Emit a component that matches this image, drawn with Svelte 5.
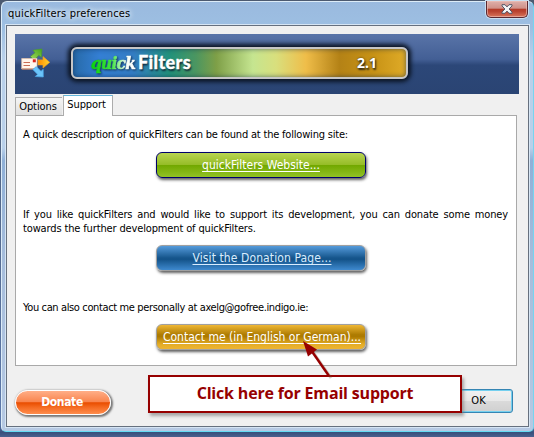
<script>
  const version = '2.1';
</script>

<div class="desktop">
  <div class="window">
    <header class="titlebar">
      <span class="title">quickFilters preferences</span>
      <button class="close" aria-label="Close">
        <svg width="12" height="10" viewBox="0 0 12 10">
          <path d="M1 .7h3l2 2.2L8 .7h3v1.2L8.1 5 11 8.1v1.2H8L6 7.1 4 9.3H1V8.1L3.9 5 1 1.9z" fill="#f4f4f6" stroke="#535666" stroke-width="1" />
        </svg>
      </button>
    </header>

    <main class="client">
      <section class="banner">
        <svg class="mail" width="30" height="30" viewBox="0 0 30 30">
          <defs>
            <linearGradient id="og" x1="0" x2="1"><stop offset="0" stop-color="#ff8a00" /><stop offset="1" stop-color="#ffd52e" /></linearGradient>
            <linearGradient id="gg" x1="0" y1="1" x2="1" y2="0"><stop offset="0" stop-color="#a7dc61" /><stop offset="1" stop-color="#46a51b" /></linearGradient>
          </defs>
          <path d="M9.500 8.500 14 4.700 12 2.200 21 1 20.300 9.200 17.800 7.300 13 12.500z" fill="url(#gg)" stroke="#4a9e2d" stroke-width=".7" />
          <path d="M.7 10.500h15.300v10.500H.7z" fill="#fff6ec" stroke="#e5c3ab" stroke-width=".7" />
          <path d="M1 21h15" stroke="#bd765b" />
          <path d="M2.500 14.500h6.500M2.500 17.500h6.500" stroke="#c76c54" stroke-width="1.100" />
          <path d="M11.800 11.300h3v3h-3z" fill="#d9261c" />
          <path d="M17 11.900h5V8.600l6.700 5.700-6.700 5.700v-3.100h-5z" fill="url(#og)" stroke="#eda020" stroke-width=".7" />
          <path d="M11.800 21.500 15.300 18.600 20 23.300 22.200 21.300 22.300 29 14.300 28.500 16.500 26.300z" fill="#6bc4fa" stroke="#49a8e8" stroke-width=".7" />
        </svg>
        <div class="plaque">
          <span class="quick">quick</span><span class="filters">Filters</span>
          <span class="version">{version}</span>
        </div>
      </section>

      <nav class="tabs">
        <button class="tab">Options</button>
        <button class="tab active">Support</button>
      </nav>

      <section class="panel">
        <p class="site">A quick description of quickFilters can be found at the following site:</p>
        <button class="link green"><span>quickFilters Website...</span></button>
        <p class="like">If you like quickFilters and would like to support its development, you can donate some money towards the further development of quickFilters.</p>
        <button class="link blue"><span>Visit the Donation Page...</span></button>
        <p class="mailto">You can also contact me personally at axelg@gofree.indigo.ie:</p>
        <button class="link gold"><span>Contact me (in English or German)...</span></button>
      </section>

      <footer class="footer">
        <button class="donate">Donate</button>
        <button class="ok">OK</button>
      </footer>
    </main>
  </div>

  <div class="callout">Click here for Email support</div>
  <svg class="arrow" width="36" height="40" viewBox="0 0 36 40">
    <path d="M10 10 28 36" stroke="#6a5230" stroke-opacity=".3" stroke-width="3" transform="translate(2 2)" />
    <path d="M10 10 28 36" stroke="#960000" stroke-width="2.400" />
    <path d="M2 1 16 9.500 7 16.500z" fill="#960000" />
  </svg>
</div>

<style>
  :global(body) { margin: 0; overflow: hidden; }
  .desktop, .desktop * { box-sizing: border-box; }
  button { margin: 0; padding: 0; font: inherit; color: inherit; }
  .desktop {
    position: relative;
    width: 534px;
    height: 437px;
    padding: 1px 0 4px 1px;
    background: linear-gradient(#4c5a70 0, #5d79ab 97%, #38507c 99%, #4a608f 100%);
    font: 11px/14px "DejaVu Sans Condensed", "DejaVu Sans", sans-serif;
    font-stretch: condensed;
    color: #000;
  }
  .window {
    width: 533px;
    height: 431px;
    display: flex;
    flex-direction: column;
    border: 1px solid #dcecf8;
    border-bottom-color: #63dcf3;
    border-right-color: #76d5f0;
    border-radius: 6px 6px 5px 5px;
    background: linear-gradient(#9abadf 0, #9dbfe2 6%, #b9d0ea 13%, #b9d0ea 34%, #8fb0d8 37%, #a6bddc 60%, #b6c9e3 100%);
    padding: 0 4px 4px 4px;
  }
  .titlebar { height: 23px; display: flex; justify-content: space-between; }
  .title { padding: 5px 0 0 2px; letter-spacing: .19px; text-shadow: 0 0 5px #fff, 0 0 6px #e8f4ff; }
  .close {
    width: 42px;
    height: 17px;
    margin-top: -1px;
    margin-right: 1px;
    display: flex;
    justify-content: center;
    align-items: center;
    border: 1px solid #5b2831;
    border-top: 0;
    border-radius: 0 0 5px 5px;
    background: linear-gradient(#dfb0ab 0, #cf8f87 46%, #b43a27 49%, #b94331 65%, #d9755c 100%);
    box-shadow: inset 0 0 0 1px #efc2bb99, 0 0 0 1px #c9dff1;
  }
  .client {
    flex: 1;
    display: flex;
    flex-direction: column;
    padding: 8px 9px 0 8px;
    border: 1px solid #66707e;
    outline: 1px solid #d6e5f4;
    background: #f0f0f0;
  }
  .banner {
    width: 504px;
    height: 60px;
    flex: none;
    display: flex;
    padding: 13px 0 0 6px;
    background: linear-gradient(#5974a8 0, #435f95 42%, #2c4778 52%, #2a4473 100%);
  }
  .mail { margin-top: 1px; }
  .plaque {
    width: 337px;
    height: 32px;
    margin-left: 20px;
    display: flex;
    align-items: center;
    border: 2px solid #c6c6c6;
    border-radius: 6px;
    background: linear-gradient(90deg, #276aa8 0, #347fd4 8%, #347ec5 18%, #22927b 29%, #4c9660 37%, #7e9f47 43%, #c5e590 54%, #d9df7d 61%, #efbd49 70%, #b48216 80%, #c79215 90%, #dfab28 100%);
    box-shadow: 0 0 4px 3px #0b1423, inset 0 0 5px #0b244d99;
  }
  .quick {
    width: 47px;
    margin-left: 18px;
    font: italic 700 17px/22px "DejaVu Serif Condensed", "DejaVu Serif", serif;
    font-stretch: condensed;
    letter-spacing: -.7px;
    color: transparent;
    background: linear-gradient(90deg, #0ad20a 0, #43e543 45%, #f7fff7 75%, #fff 100%);
    background-clip: text;
    -webkit-text-stroke: .7px transparent;
    filter: drop-shadow(1px 1px 1px #123050);
  }
  .filters {
    margin: -3px 0 0 0;
    font: 900 18px/22px Lato, sans-serif;
    letter-spacing: .35px;
    color: #fff;
    -webkit-text-stroke: .3px #fff;
    text-shadow: 1px 2px 2px #102638;
  }
  .version {
    margin: -1px 29px 0 auto;
    font: 700 14px/20px "Noto Sans", sans-serif;
    color: #fff;
    text-shadow: 1px 2px 2px #2b2510, 0 0 2px #40340d;
  }
  .tabs { height: 21px; flex: none; display: flex; align-items: flex-end; }
  .tab {
    height: 18px;
    width: 47px;
    padding-right: 2px;
    border: 1px solid #acacac;
    border-bottom: 0;
    border-right: 0;
    background: linear-gradient(#f5f5f5, #dfdfdf);
    letter-spacing: -.1px;
  }
  .tab.active {
    height: 21px;
    width: 50px;
    margin: 0 0 -1px 1px;
    padding: 0 3px 3px 0;
    position: relative;
    border-right: 1px solid #acacac;
    border-top-color: #62b5db;
    background: #fff;
  }
  .panel {
    width: 502px;
    height: 251px;
    flex: none;
    display: flex;
    flex-direction: column;
    padding: 12px 8px 0 7px;
    border: 1px solid #a9a9a9;
    background: #fff;
  }
  p { margin: 0; }
  .site { letter-spacing: -.195px; }
  .like { margin-top: 30px; text-align: justify; letter-spacing: -.14px; }
  .mailto { margin-top: 30px; letter-spacing: -.37px; }
  .link {
    width: 210px;
    height: 26px;
    flex: none;
    margin: 9px 0 0 133px;
    border: 1px solid #a0a0a0;
    border-radius: 6px;
    font-size: 12px;
    line-height: 16px;
    color: #fff;
    text-decoration: underline;
    text-underline-offset: 2px;
    text-decoration-skip-ink: none;
    box-shadow: 1px 2px 3px #5f5f5f;
  }
  .green { margin-top: 10px; border-color: #00006c; background: linear-gradient(#b8d451 0, #96bd28 48%, #72a800 52%, #91c225 100%); }
  .blue { padding-left: 2px; color: #d9edff; letter-spacing: .1px; background: linear-gradient(#559bdb 0, #18588f 48%, #135288 55%, #3e89ce 100%); }
  .gold { padding-left: 2px; background: linear-gradient(#efb735 0, #ae7c02 40%, #ad7a00 48%, #e3ac27 80%, #eeb532 100%); }
  .footer { flex: 1; display: flex; justify-content: space-between; }
  .donate {
    width: 96px;
    height: 25px;
    margin-top: 24px;
    padding: 0 2px 2px 0;
    border: 1px solid #fff;
    border-radius: 13px;
    background: linear-gradient(#ffae87 0, #f9854e 47%, #e94d00 51%, #f46920 70%, #ff8d4d 100%);
    box-shadow: 1px 1px 2px 1px #777;
    font: 700 12px/14px "DejaVu Sans Condensed", "DejaVu Sans", sans-serif;
    letter-spacing: -.35px;
    color: #fff;
  }
  .ok {
    width: 75px;
    height: 24px;
    margin: 23px 6px 0 0;
    padding-left: 6px;
    border: 1px solid #3585b3;
    border-radius: 3px;
    background: linear-gradient(#f1f1f1 0, #e8e8e8 49%, #dadada 51%, #d0d0d0 100%);
    box-shadow: inset 0 0 0 1px #75d0ef;
  }
  .callout {
    position: absolute;
    left: 148px;
    top: 375px;
    width: 314px;
    height: 38px;
    border: 2px solid #960000;
    background: #fff;
    box-shadow: 2px 3px 3px #77777799;
    font: 700 16px/32px "Open Sans", "Noto Sans", sans-serif;
    letter-spacing: -.18px;
    text-align: center;
    color: #960000;
  }
  .arrow { position: absolute; left: 301px; top: 340px; }
</style>
